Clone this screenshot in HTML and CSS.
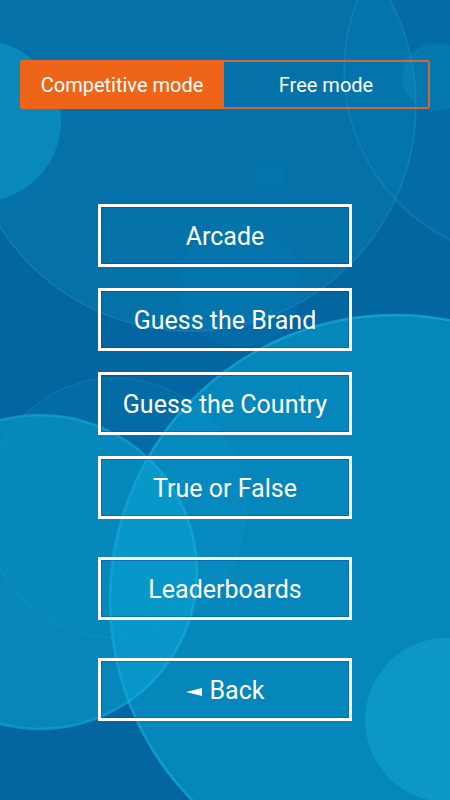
FILE: index.html
```html
<!DOCTYPE html>
<html lang="en">
<head>
<meta charset="utf-8">
<title>Game modes</title>
<link rel="stylesheet" href="styles.css">
</head>
<body>
<div class="screen">
  <svg class="backdrop" viewBox="0 0 450 800" width="450" height="800" aria-hidden="true">
    <circle cx="190" cy="105" r="226" fill="rgba(14,170,215,0.17)" stroke="rgba(90,190,230,0.2)" stroke-width="1.5"/>
    <circle cx="533" cy="70" r="189" fill="rgba(14,170,215,0.09)" stroke="rgba(90,190,230,0.18)" stroke-width="1.5"/>
    <circle cx="436" cy="77" r="34" fill="rgba(14,170,215,0.2)"/>
    <circle cx="-20" cy="121" r="81" fill="rgba(14,170,215,0.42)"/>
    <circle cx="270" cy="176" r="15" fill="rgba(14,170,215,0.09)"/>
    <circle cx="240" cy="285" r="62" fill="rgba(14,170,215,0.08)"/>
    <circle cx="115" cy="508" r="130" fill="rgba(14,170,215,0.08)" stroke="rgba(60,180,225,0.18)" stroke-width="1.5"/>
    <circle cx="395" cy="600" r="285" fill="rgba(10,165,212,0.52)" stroke="rgba(30,185,230,0.55)" stroke-width="2.5"/>
    <circle cx="40" cy="572" r="157" fill="rgba(10,165,212,0.5)" stroke="rgba(30,185,230,0.45)" stroke-width="2.5"/>
    <circle cx="447" cy="720" r="82" fill="rgba(20,170,215,0.45)"/>
  </svg>

  <main class="content">
    <div class="tabs">
      <div class="tab tab-active">Competitive mode</div>
      <div class="tab tab-free">Free mode</div>
    </div>

    <nav class="menu">
      <div class="mode-list">
        <button class="menu-btn">Arcade</button>
        <button class="menu-btn">Guess the Brand</button>
        <button class="menu-btn">Guess the Country</button>
        <button class="menu-btn">True or False</button>
      </div>
      <button class="menu-btn menu-btn-spaced">Leaderboards</button>
      <button class="menu-btn menu-btn-spaced">
        <svg class="back-arrow" viewBox="0 0 16 8" width="16" height="8" aria-hidden="true"><polygon points="0,4 16,0 16,8" fill="#ffffff"/></svg>
        <span>Back</span>
      </button>
    </nav>
  </main>
</div>
</body>
</html>
```
FILE: styles.css
```css
html, body {
  margin: 0;
  padding: 0;
  background: #0366a1;
}

body {
  font-family: Roboto, "Noto Sans", "Liberation Sans", sans-serif;
  color: #ffffff;
}

.screen {
  position: relative;
  width: 450px;
  height: 800px;
  overflow: hidden;
  background: #0366a1;
}

.backdrop {
  position: absolute;
  left: 0;
  top: 0;
  display: block;
}

.content {
  position: relative;
  padding-top: 60px;
  display: flex;
  flex-direction: column;
  align-items: center;
}

.tabs {
  display: flex;
  width: 410px;
  height: 49px;
}

.tab {
  flex: 1;
  display: flex;
  align-items: center;
  justify-content: center;
  padding-top: 1px;
  font-size: 20px;
  color: #ffffff;
  box-sizing: border-box;
}

.tab-active {
  background: #ee6519;
  border-radius: 3px 0 0 3px;
}

.tab-free {
  border: 2px solid rgba(232, 98, 50, 0.9);
  border-left: none;
  border-radius: 0 3px 3px 0;
}

.menu {
  margin-top: 95px;
  display: flex;
  flex-direction: column;
  align-items: center;
}

.mode-list {
  display: flex;
  flex-direction: column;
  gap: 21px;
}

.menu-btn {
  width: 254px;
  height: 63px;
  box-sizing: border-box;
  border: 3px solid #ffffff;
  background: transparent;
  box-shadow: inset 0 0 0 1px rgba(0, 50, 140, 0.3);
  color: #ffffff;
  font-family: Roboto, "Noto Sans", "Liberation Sans", sans-serif;
  font-size: 25px;
  display: flex;
  align-items: center;
  justify-content: center;
  gap: 8px;
  padding: 2px 0 0;
  margin: 0;
}

.menu-btn-spaced {
  margin-top: 38px;
}

.back-arrow {
  display: block;
  margin-top: 2px;
}
```
